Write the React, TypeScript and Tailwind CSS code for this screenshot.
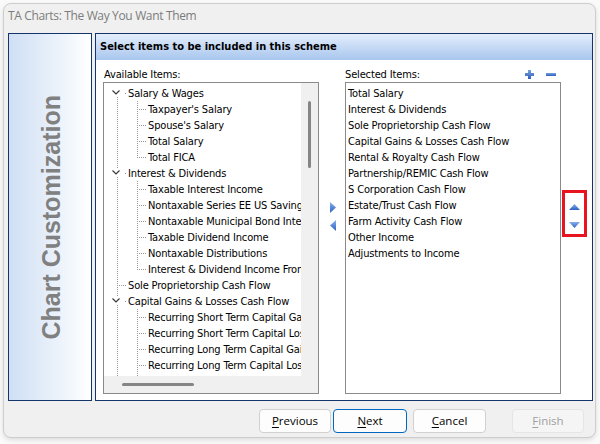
import React from "react";

type Node = { t: string; k: "g" | "c" | "l"; first?: boolean; last?: boolean };

const tree: Node[] = [
  { t: "Salary & Wages", k: "g", first: true },
  { t: "Taxpayer's Salary", k: "c" },
  { t: "Spouse's Salary", k: "c" },
  { t: "Total Salary", k: "c" },
  { t: "Total FICA", k: "c", last: true },
  { t: "Interest & Dividends", k: "g" },
  { t: "Taxable Interest Income", k: "c" },
  { t: "Nontaxable Series EE US Savings Bond Interest", k: "c" },
  { t: "Nontaxable Municipal Bond Interest", k: "c" },
  { t: "Taxable Dividend Income", k: "c" },
  { t: "Nontaxable Distributions", k: "c" },
  { t: "Interest & Dividend Income From Pass-Through Entities", k: "c", last: true },
  { t: "Sole Proprietorship Cash Flow", k: "l" },
  { t: "Capital Gains & Losses Cash Flow", k: "g" },
  { t: "Recurring Short Term Capital Gains", k: "c" },
  { t: "Recurring Short Term Capital Losses", k: "c" },
  { t: "Recurring Long Term Capital Gains", k: "c" },
  { t: "Recurring Long Term Capital Losses", k: "c" },
  { t: "Non-Recurring Short Term Capital Gains", k: "c" },
];

const selected = [
  "Total Salary",
  "Interest & Dividends",
  "Sole Proprietorship Cash Flow",
  "Capital Gains & Losses Cash Flow",
  "Rental & Royalty Cash Flow",
  "Partnership/REMIC Cash Flow",
  "S Corporation Cash Flow",
  "Estate/Trust Cash Flow",
  "Farm Activity Cash Flow",
  "Other Income",
  "Adjustments to Income",
];

const DOT = "#9a9a9a";

function Guides({ n }: { n: Node }) {
  if (n.k === "g") {
    return (
      <svg width="24" height="16" className="shrink-0" shapeRendering="crispEdges">
        {!n.first && <line x1="13.5" y1="0" x2="13.5" y2="4" stroke={DOT} strokeDasharray="1 1" />}
        <line x1="13.5" y1="12" x2="13.5" y2="16" stroke={DOT} strokeDasharray="1 1" />
        <polyline points="8.5,5.5 12,9 15.5,5.5" fill="none" stroke="#3a3a3a" strokeWidth="1.2" shapeRendering="geometricPrecision" />
        <rect x="21" y="8" width="1" height="1" fill={DOT} />
      </svg>
    );
  }
  if (n.k === "l") {
    return (
      <svg width="24" height="16" className="shrink-0" shapeRendering="crispEdges">
        <line x1="13.5" y1="0" x2="13.5" y2="16" stroke={DOT} strokeDasharray="1 1" />
        <line x1="15" y1="8.5" x2="23" y2="8.5" stroke={DOT} strokeDasharray="1 1" />
      </svg>
    );
  }
  return (
    <svg width="44" height="16" className="shrink-0" shapeRendering="crispEdges">
      <line x1="13.5" y1="0" x2="13.5" y2="16" stroke={DOT} strokeDasharray="1 1" />
      <line x1="33.5" y1="0" x2="33.5" y2={n.last ? 9 : 16} stroke={DOT} strokeDasharray="1 1" />
      <line x1="35" y1="8.5" x2="43" y2="8.5" stroke={DOT} strokeDasharray="1 1" />
    </svg>
  );
}

function Tri({ dir, w, h }: { dir: "up" | "down" | "left" | "right"; w: number; h: number }) {
  const pts =
    dir === "up"
      ? `0,${h} ${w / 2},0 ${w},${h}`
      : dir === "down"
      ? `0,0 ${w},0 ${w / 2},${h}`
      : dir === "right"
      ? `0,0 ${w},${h / 2} 0,${h}`
      : `${w},0 0,${h / 2} ${w},${h}`;
  const id = `g-${dir}`;
  return (
    <svg width={w} height={h} className="block">
      <defs>
        <linearGradient id={id} x1="0" y1="0" x2="0" y2="1">
          <stop offset="0" stopColor="#86b0ec" />
          <stop offset="1" stopColor="#2f62c4" />
        </linearGradient>
      </defs>
      <polygon points={pts} fill={`url(#${id})`} />
    </svg>
  );
}

function Btn({ label, u, cls }: { label: string; u: number; cls: string }) {
  return (
    <div className={`h-[24px] rounded-[4px] border flex items-center justify-center text-[11.5px] ${cls}`}>
      <span>
        {label.slice(0, u)}
        <span className="underline underline-offset-2">{label[u]}</span>
        {label.slice(u + 1)}
      </span>
    </div>
  );
}

export default function App() {
  return (
    <div
      className="w-[600px] h-[444px] bg-[#fafafa] pl-[3px] pt-[3px] overflow-hidden text-black"
      style={{ fontFamily: '"Liberation Sans", Arial, sans-serif' }}
    >
      <div className="w-[593px] h-[435px] rounded-[8px] border border-[#cdcdcd] bg-[#f0f0f0] flex flex-col shadow-[0_2px_5px_rgba(0,0,0,0.12)]">
        <div className="h-[24px] pl-[4px] flex items-center text-[12px] text-[#7c7c7c] font-['Open_Sans',sans-serif] tracking-[-0.35px]">
          TA Charts: The Way You Want Them
        </div>
        <div className="mt-[5px] pl-[4px] h-[368px] flex gap-[3px]">
          <div className="w-[84px] h-full border border-[#16346c] bg-gradient-to-r from-[#cfdff4] to-white flex items-center justify-center">
            <div className="[writing-mode:vertical-rl] rotate-180 text-[25px] font-bold text-[#808080] ml-[2px] whitespace-nowrap leading-none">
              Chart Customization
            </div>
          </div>
          <div className="w-[498px] h-full border border-[#16346c] bg-white flex flex-col font-['DejaVu_Sans_Condensed','Liberation_Sans',sans-serif]">
            <div className="h-[26px] bg-gradient-to-b from-[#e4eefb] to-[#a8c6ee] pl-[4px] flex items-center text-[11px] font-bold text-black">
              Select items to be included in this scheme
            </div>
            <div className="pt-[6px] pl-[7px] flex text-[11px] tracking-[-0.15px]">
              {/* Available */}
              <div className="w-[216px] flex flex-col">
                <div className="h-[16px] flex items-center pl-[1px]">
                  <span className="mt-[2px]">Available Items:</span>
                </div>
                <div className="h-[312px] border border-[#8a8a8a] flex flex-col">
                  <div className="flex flex-1 min-h-0">
                    <div className="flex-1 min-w-0 overflow-hidden pt-[2px]">
                      {tree.map((n, i) => (
                        <div key={i} className="h-[16px] flex items-center whitespace-nowrap">
                          <Guides n={n} />
                          <span className="mt-[2px]">{n.t}</span>
                        </div>
                      ))}
                    </div>
                    <div className="w-[17px] bg-[#f0f0f0] flex justify-center">
                      <div className="mt-[18px] w-[3px] h-[67px] rounded-full bg-[#858585]" />
                    </div>
                  </div>
                  <div className="h-[17px] bg-[#f0f0f0] flex items-center shrink-0">
                    <div className="ml-[18px] w-[72px] h-[3px] rounded-full bg-[#858585]" />
                  </div>
                </div>
              </div>
              {/* middle arrows */}
              <div className="w-[26px] flex flex-col items-center pl-[1px]">
                <div className="mt-[136px]">
                  <Tri dir="right" w={6} h={11} />
                </div>
                <div className="mt-[7px]">
                  <Tri dir="left" w={6} h={11} />
                </div>
              </div>
              {/* Selected */}
              <div className="w-[216px] flex flex-col">
                <div className="h-[16px] flex items-center justify-between">
                  <span className="mt-[2px]">Selected Items:</span>
                  <div className="flex items-center gap-[12px] pr-[5px]">
                    <svg width="9" height="9" className="block">
                      <defs>
                        <linearGradient id="pm" x1="0" y1="0" x2="0" y2="1">
                          <stop offset="0" stopColor="#7aa2e0" />
                          <stop offset="1" stopColor="#2e5db8" />
                        </linearGradient>
                      </defs>
                      <path d="M3 0h3v3h3v3H6v3H3V6H0V3h3z" fill="url(#pm)" />
                    </svg>
                    <svg width="10" height="3" className="block">
                      <rect x="0" y="0" width="10" height="3" fill="url(#pm)" />
                    </svg>
                  </div>
                </div>
                <div className="h-[312px] border border-[#8a8a8a] pt-[2px] pl-[2px]">
                  {selected.map((s) => (
                    <div key={s} className="h-[16px] flex items-center whitespace-nowrap">
                      <span className="mt-[2px]">{s}</span>
                    </div>
                  ))}
                </div>
              </div>
              {/* up/down */}
              <div className="ml-[1px] w-[25px]">
                <div className="mt-[124px] h-[47px] border-[3px] border-[#e8141f] flex flex-col items-center">
                  <div className="mt-[11px]">
                    <Tri dir="up" w={11} h={6} />
                  </div>
                  <div className="mt-[12px]">
                    <Tri dir="down" w={11} h={6} />
                  </div>
                </div>
              </div>
            </div>
          </div>
        </div>
        <div className="mt-[8px] pl-[255px] flex font-['Open_Sans',sans-serif]">
          <div className="w-[72px]">
            <Btn label="Previous" u={0} cls="border-[#d0d0d0] bg-[#fdfdfd]" />
          </div>
          <div className="ml-[2px] w-[74px]">
            <Btn label="Next" u={0} cls="border-[#0067c0] bg-[#fdfdfd]" />
          </div>
          <div className="ml-[6px] w-[73px]">
            <Btn label="Cancel" u={0} cls="border-[#d0d0d0] bg-[#fdfdfd]" />
          </div>
          <div className="ml-[26px] w-[72px]">
            <Btn label="Finish" u={0} cls="border-[#e5e5e5] bg-[#f5f5f5] text-[#a0a0a0]" />
          </div>
        </div>
      </div>
    </div>
  );
}
